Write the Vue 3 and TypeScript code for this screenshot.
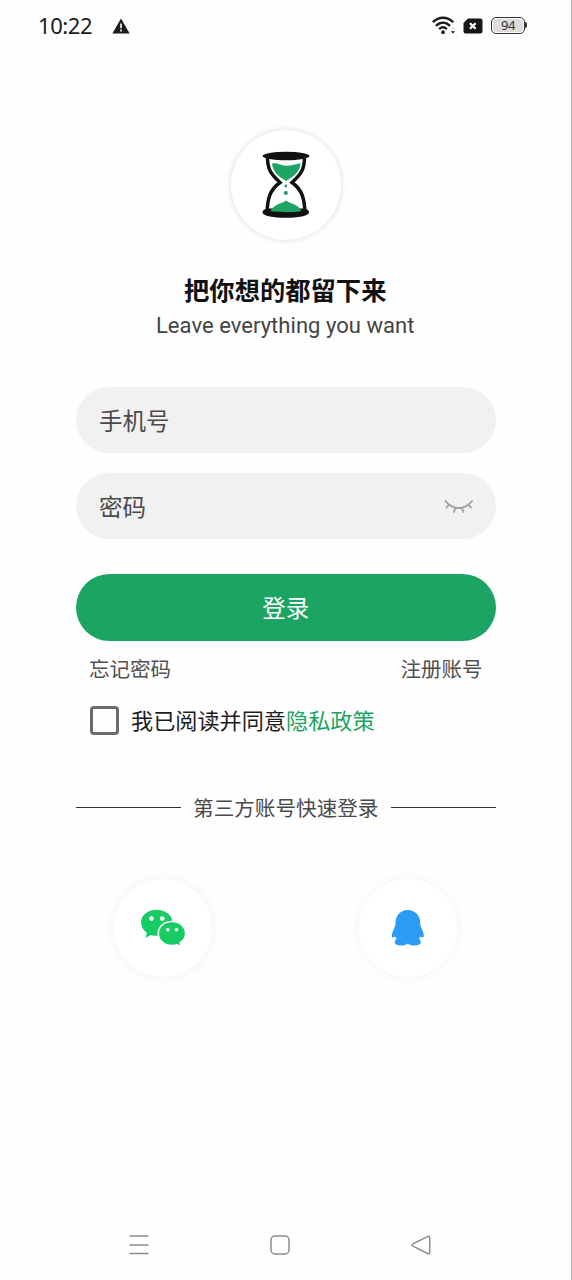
<script setup lang="ts">
import { ref } from 'vue'

const phone = ref('')
const password = ref('')
const agreed = ref(false)
</script>

<template>
  <div class="screen">
    <header class="status">
      <span class="clock">10:22</span>
      <svg class="warn" width="18" height="16" viewBox="0 0 18 16">
        <path d="M9 .4 17.6 15.4H.4Z" fill="#1b1b1b" />
        <path d="M9 5.6v4.6M9 11.6v1.9" stroke="#fff" stroke-width="1.6" />
      </svg>
      <svg class="wifi" width="24" height="19" viewBox="0 0 24 19" fill="none">
        <g stroke="#1b1b1b" stroke-width="2.4">
          <path d="M.8 6.1C6.8.2 15.2.2 21.2 6.1" />
          <path d="M4 9.8c4.300-4.100 9.700-4.100 14 0" />
          <path d="M7.200 13.100c2.400-2.300 5.200-2.300 7.600 0" />
        </g>
        <circle cx="11" cy="16.2" r="1.9" fill="#1b1b1b" />
        <path d="M18.8 15.2h4.4L21 17.6Z" fill="#1b1b1b" />
        <path d="M18.8 13.4h4.4L21 11Z" fill="#ddd" />
      </svg>
      <svg class="sim" width="20" height="16" viewBox="0 0 20 16">
        <path d="M5 .5h12.5A2 2 0 0 1 19.5 2.5V13.5A2 2 0 0 1 17.5 15.5H2.5A2 2 0 0 1 .5 13.5V5Z" fill="#161616" />
        <path d="m7 5.2 5.600 5.600M12.600 5.200 7 10.800" stroke="#fff" stroke-width="2.3" />
      </svg>
      <div class="battery"><span class="level">94</span></div>
    </header>

    <main class="content">
      <div class="logo">
        <svg width="50" height="68" viewBox="0 0 50 68">
          <path d="M6.5 6C6.5 18 9.5 23 19 31.5 8.5 39 6.5 48 6 62M43.5 6C43.5 18 40.5 23 31 31.5 41.5 39 43.5 48 44 62" fill="none" stroke="#111" stroke-width="3.5" />
          <path d="M11 12.5C17 11.5 19 14.5 25 14.8 31 15 34 13 39.5 12.3 39 21 33 25 25.3 30 16 25 12 20 11 12.5Z" fill="#1ba462" />
          <circle cx="24.8" cy="35" r="1.4" fill="#1ba462" />
          <circle cx="24.8" cy="42" r="2.1" fill="#1ba462" />
          <path d="M1.5 61.5C1.5 57.5 7 57.5 12 57.5H38C43 57.5 48 57.5 48 61.5 48 68.5 1.5 68.5 1.5 61.5Z" fill="#111" />
          <path d="M9.5 60C13 53 20 53 25 49.5 30 53 37 53 40.5 60 35 61.5 15 61.5 9.5 60Z" fill="#1ba462" />
          <ellipse cx="25" cy="5" rx="23.5" ry="4.2" fill="#111" />
        </svg>
      </div>

      <h1 class="title">把你想的都留下来</h1>
      <p class="subtitle">Leave everything you want</p>

      <form class="form" @submit.prevent>
        <label class="field">
          <input v-model="phone" class="input" type="tel" placeholder="手机号" />
        </label>
        <label class="field">
          <input v-model="password" class="input" type="password" placeholder="密码" />
          <svg class="eye" width="30" height="16" viewBox="0 0 30 16" fill="none" stroke="#a0a0a0" stroke-width="1.8" stroke-linecap="round">
            <path d="M1.500 2C8.500 11.300 21 11.300 28 2M5 5.500 2.500 8.500M11.300 8.900 10 13M18 8.900 19.300 13M24.300 5.500 27 8.500" />
          </svg>
        </label>
        <button class="submit" type="submit">登录</button>
      </form>

      <div class="links">
        <span>忘记密码</span>
        <span>注册账号</span>
      </div>

      <label class="agreement">
        <input v-model="agreed" class="check" type="checkbox" />
        <span>我已阅读并同意<span class="policy">隐私政策</span></span>
      </label>

      <div class="divider"><span class="caption">第三方账号快速登录</span></div>

      <div class="social">
        <div class="round">
          <svg width="46" height="38" viewBox="0 0 46 38">
            <path d="M16.5.8C7.700.8 1 6.300 1 13.600c0 4.200 2.300 7.700 5.800 10.200L5.600 28.700l5.200-2.800c2 .6 4 .8 6.200.8C26 26.700 32.500 21 32.500 13.600 32.500 6.300 25.500.8 16.500.8Z" fill="#18cc64" />
            <path d="M32 12.400c-7.800 0-13.700 5.200-13.700 12s5.900 12 13.700 12c1.800 0 3.400-.2 5-.7l4.200 2-1-4c3.200-2.200 5.400-5.400 5.400-9.300 0-6.800-5.800-12-13.600-12Z" fill="#18cc64" stroke="#fff" stroke-width="1.5" />
            <g fill="#fff">
              <circle cx="11.5" cy="9.6" r="2.3" /><circle cx="22.3" cy="9.6" r="2.3" />
              <circle cx="27.8" cy="20.8" r="1.8" /><circle cx="36.5" cy="20.8" r="1.8" />
            </g>
          </svg>
        </div>
        <div class="round">
          <svg width="34" height="38" viewBox="0 0 34 38">
            <path d="M16.800 1C9.500 1 4.500 6.600 4.500 13.500c0 2-.2 3.100-.9 4.700C2.300 21.500.8 24 .8 26.700c0 1.300.5 2 1.100 1.800.8-.3 1.500-.7 2.200-1 .4 1 .9 1.700 1.700 2.500-1.400.7-2 1.800-2 3.300 0 2.300 2.900 3.200 6.300 3.200 3 0 5.200-.8 6.700-2.100 1.500 1.300 3.700 2.100 6.700 2.100 3.400 0 6.300-.9 6.300-3.200 0-1.500-.6-2.600-2-3.300.8-.8 1.300-1.500 1.700-2.500.7.300 1.400.7 2.200 1 .6.200 1.100-.5 1.100-1.800 0-2.700-1.400-5.200-2.700-8.500-.7-1.600-.9-2.700-.9-4.700C29.200 6.600 24 1 16.800 1Z" fill="#2b9cf6" />
          </svg>
        </div>
      </div>
    </main>

    <nav class="nav">
      <svg width="22" height="22" viewBox="0 0 22 22"><path d="M1.500 2h19M1.500 11h19M1.500 19.500h19" /></svg>
      <svg width="22" height="22" viewBox="0 0 22 22"><rect x="2" y="2" width="18" height="18" rx="4" /></svg>
      <svg width="22" height="22" viewBox="0 0 22 22"><path d="M18 2.300 3 9.800Q1 11 3 12.200L18 19.700Q19.700 20.200 19.700 18.500V3.500Q19.700 1.700 18 2.300Z" /></svg>
    </nav>
  </div>
</template>

<style>
body {
  margin: 0;
  background: #fff;
}
</style>

<style scoped>
.screen {
  box-sizing: border-box;
  display: flex;
  flex-direction: column;
  width: 572px;
  height: 1280px;
  border-right: 1px solid #b4b4b4;
  background: #fefefe;
  color: #444;
  font-family: Roboto, "Noto Sans CJK SC", sans-serif;
}
.status {
  display: flex;
  align-items: center;
  box-sizing: border-box;
  height: 52px;
  padding: 0 44px 1px 38px;
}
.clock {
  width: 74px;
  padding-bottom: 1px;
  color: #1b1b1b;
  font-family: "Noto Sans", sans-serif;
  font-size: 22px;
  letter-spacing: -0.4px;
}
.wifi {
  margin-left: auto;
}
.sim {
  margin: 0 8px 0 7px;
}
.battery {
  position: relative;
  box-sizing: border-box;
  width: 34px;
  height: 17px;
  margin-right: 2px;
  padding: 1px;
  border: 1.5px solid #333;
  border-radius: 5px;
}
.battery::after {
  content: "";
  position: absolute;
  top: 4px;
  right: -3px;
  width: 2px;
  height: 6px;
  border-radius: 0 2px 2px 0;
  background: #333;
}
.level {
  display: block;
  height: 13px;
  border-radius: 3px;
  background: #ddd;
  color: #333;
  font-family: "Noto Sans", sans-serif;
  font-size: 13px;
  line-height: 13px;
  letter-spacing: -0.5px;
  text-align: center;
}
.content {
  display: flex;
  flex: 1;
  flex-direction: column;
  width: 419.5px;
  margin-left: 76px;
}
.logo {
  display: flex;
  align-items: center;
  align-self: center;
  justify-content: center;
  width: 110px;
  height: 110px;
  margin-top: 78px;
  border-radius: 50%;
  background: #fff;
  box-shadow: 0 0 5px 1px rgba(0, 0, 0, 0.11);
}
.title {
  margin: 32px 0 0 -1px;
  padding-top: 1px;
  color: #111;
  font-size: 25.3px;
  font-weight: 700;
  line-height: 38px;
  text-align: center;
  white-space: nowrap;
}
.subtitle {
  margin: 0 0 0 -1px;
  font-size: 22px;
  line-height: 30px;
  letter-spacing: 0.04px;
  text-align: center;
}
.form {
  display: flex;
  flex-direction: column;
  margin-top: 46px;
}
.field {
  display: flex;
  align-items: center;
  box-sizing: border-box;
  height: 66px;
  margin-bottom: 20px;
  padding: 2px 21.5px 0 23px;
  border-radius: 33px;
  background: #f1f1f1;
}
.input {
  flex: 1;
  min-width: 0;
  height: 40px;
  padding: 2px 0 0;
  border: 0;
  outline: 0;
  background: transparent;
  color: #444;
  font: inherit;
  font-size: 23.5px;
}
.input::placeholder {
  color: #4a4a4a;
  opacity: 1;
}
.submit {
  height: 67px;
  margin-top: 15px;
  padding: 0 0 2px;
  border: 0;
  border-radius: 34px;
  background: #1ba462;
  color: #fff;
  font: inherit;
  font-size: 23.5px;
}
.links {
  display: flex;
  justify-content: space-between;
  margin-top: 14px;
  padding: 0 13px;
  color: #505050;
  font-size: 20.5px;
  line-height: 30px;
}
.agreement {
  display: flex;
  align-items: center;
  margin-top: 17px;
  padding-left: 14px;
  gap: 12px;
  color: #1c1c1c;
  font-size: 22.15px;
  line-height: 34px;
}
.agreement > span {
  padding-top: 2px;
}
.check {
  box-sizing: border-box;
  width: 29px;
  height: 29px;
  margin: 0;
  border: 3px solid #6b6b6b;
  border-radius: 4px;
  appearance: none;
}
.policy {
  color: #1ba462;
}
.divider {
  display: flex;
  align-items: center;
  gap: 12.5px;
  margin-top: 53px;
  color: #4a4a4a;
  font-size: 20.6px;
  line-height: 30px;
}
.caption {
  padding-top: 3px;
}
.divider::before,
.divider::after {
  content: "";
  flex: 1;
  height: 1px;
  background: #333;
}
.social {
  display: flex;
  justify-content: space-between;
  margin-top: 55px;
  padding: 0 38.5px 0 37.5px;
}
.round {
  display: flex;
  align-items: center;
  justify-content: center;
  width: 98px;
  height: 98px;
  border-radius: 50%;
  background: #fff;
  box-shadow: 0 0 12px rgba(0, 0, 0, 0.055);
}
.nav {
  display: flex;
  justify-content: space-between;
  height: 46px;
  padding: 0 139px 0 128px;
}
.nav svg {
  fill: none;
  stroke: #8c8c8c;
  stroke-width: 1.5;
}
</style>
